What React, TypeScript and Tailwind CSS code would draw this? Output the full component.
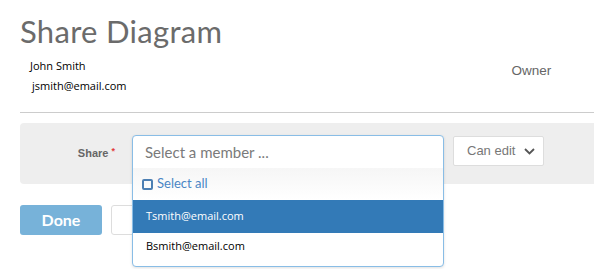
const App = () => {
  return (
    <div className="w-[594px] h-[269px] bg-white overflow-hidden font-['Lato',sans-serif]">
      <h1 className="pl-[20px] pt-[11px] text-[31px] leading-[40px] text-[#6b6b6b] tracking-[0.3px]">Share Diagram</h1>

      <div className="flex items-start mt-[8px]">
        <div className="pl-[30px] font-['Open_Sans',sans-serif] text-[11px] text-black">
          <div className="leading-[14px]">John Smith</div>
          <div className="leading-[14px] mt-[6px] pl-[2px]">jsmith@email.com</div>
        </div>
        <div className="ml-[385px] mt-[2px] font-['Liberation_Sans',sans-serif] text-[13.5px] text-[#666]">Owner</div>
      </div>

      <div className="ml-[20px] mt-[19px] border-t border-[#cccccc]" />

      <div className="ml-[20px] mt-[10px] h-[61px] bg-[#eeeeee] rounded-l-[4px] flex items-start pt-[12px]">
        <div className="w-[95px] pt-[10px] text-right font-['Liberation_Sans',sans-serif] text-[11px] font-bold text-[#666]">
          Share <span className="text-[#e23b3b] text-[9px] align-top">*</span>
        </div>
        <div className="relative ml-[17px] w-[312px] h-[33px]">
          <div className="absolute left-0 top-0 w-[312px] h-[132px] bg-white border border-[#89bde6] rounded-[4px] shadow-[0_1px_3px_rgba(0,0,0,0.12)] z-10 overflow-hidden">
            <div className="h-[32px] flex items-center pl-[12px] font-['Lato',sans-serif] text-[15px] text-[#7a7a7a]">Select a member ...</div>
            <div className="h-[32px] flex items-center pl-[9px] bg-gradient-to-b from-[#f6f6f6] to-white">
              <span className="w-[11px] h-[11px] border-2 border-[#4c7fb3] rounded-[2px] mr-[4px]" />
              <span className="font-['Lato',sans-serif] text-[13px] text-[#4a86c5]">Select all</span>
            </div>
            <div className="h-[33px] flex items-center pl-[13px] bg-[#337ab7] font-['Open_Sans',sans-serif] text-[11px] text-white">Tsmith@email.com</div>
            <div className="h-[27px] flex items-center pl-[13px] font-['Open_Sans',sans-serif] text-[11px] text-black">Bsmith@email.com</div>
          </div>
        </div>
        <div className="ml-[9px] mt-[1px] w-[91px] h-[30px] bg-white border border-[#dddddd] rounded-[2px] flex items-center justify-between pl-[13px] pr-[8px]">
          <span className="font-['Liberation_Sans',sans-serif] text-[13px] text-[#777]">Can edit</span>
          <svg width="11" height="7" viewBox="0 0 11 7" fill="none">
            <path d="M1 1l4.5 4.5L10 1" stroke="#555" strokeWidth="1.8" />
          </svg>
        </div>
      </div>

      <div className="ml-[20px] mt-[21px] flex gap-[9px]">
        <button className="w-[82px] h-[30px] bg-[#77b2d9] rounded-[3px] text-white font-['Lato',sans-serif] font-bold text-[16px]">Done</button>
        <button className="w-[82px] h-[30px] bg-white border border-[#dddddd] rounded-[3px]" />
      </div>
    </div>
  )
}

export default App
